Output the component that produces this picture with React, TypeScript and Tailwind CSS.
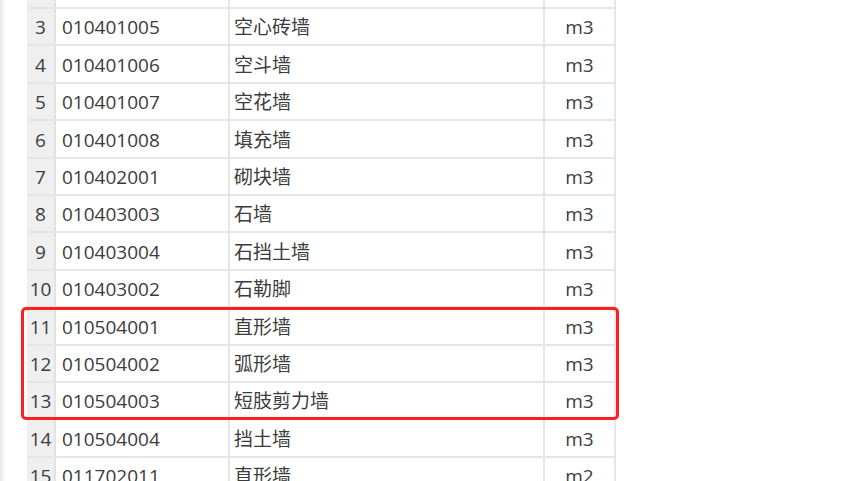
import React from "react"

type Row = { no: number; code: string; name: string; unit: string }

const rows: Row[] = [
  { no: 3, code: "010401005", name: "空心砖墙", unit: "m3" },
  { no: 4, code: "010401006", name: "空斗墙", unit: "m3" },
  { no: 5, code: "010401007", name: "空花墙", unit: "m3" },
  { no: 6, code: "010401008", name: "填充墙", unit: "m3" },
  { no: 7, code: "010402001", name: "砌块墙", unit: "m3" },
  { no: 8, code: "010403003", name: "石墙", unit: "m3" },
  { no: 9, code: "010403004", name: "石挡土墙", unit: "m3" },
  { no: 10, code: "010403002", name: "石勒脚", unit: "m3" },
  { no: 11, code: "010504001", name: "直形墙", unit: "m3" },
  { no: 12, code: "010504002", name: "弧形墙", unit: "m3" },
  { no: 13, code: "010504003", name: "短肢剪力墙", unit: "m3" },
  { no: 14, code: "010504004", name: "挡土墙", unit: "m3" },
  { no: 15, code: "011702011", name: "直形墙", unit: "m2" },
]

function TableRow({ row, height = "h-[37.4px]" }: { row?: Row; height?: string }) {
  return (
    <div className={`flex ${height} shrink-0 border-b-2 border-[#e6e6e6]`}>
      <div className="w-[29px] flex items-center justify-center pt-[2px] bg-[#efefef] border-r-2 border-[#e2e2e2]">
        {row?.no}
      </div>
      <div className="w-[174px] flex items-center pl-[6px] pt-[2px] border-r-2 border-[#e6e6e6]">
        {row?.code}
      </div>
      <div className="w-[315px] flex items-center pl-[4px] pt-[2px] border-r-2 border-[#e6e6e6]">
        {row?.name}
      </div>
      <div className="w-[71px] flex items-center justify-center pt-[2px] border-r-2 border-[#e6e6e6]">
        {row?.unit}
      </div>
    </div>
  )
}

export default function App() {
  const before = rows.slice(0, 8)
  const marked = rows.slice(8, 11)
  const after = rows.slice(11)

  return (
    <div
      className="relative h-[481px] w-[848px] overflow-hidden bg-white flex text-[19px] text-[#3c3c3c]"
      style={{ fontFamily: '"Open Sans", "Noto Sans CJK SC", sans-serif' }}
    >
      {/* soft shadow on the left edge */}
      <div className="w-[6px] shrink-0 bg-gradient-to-r from-[#e9e9e9] to-white" />
      <div className="ml-[21px] flex flex-col">
        <TableRow height="h-[9px]" />
        {before.map((r) => (
          <TableRow key={r.no} row={r} />
        ))}
        <div className="relative flex flex-col">
          {marked.map((r) => (
            <TableRow key={r.no} row={r} />
          ))}
          <div className="absolute -left-[6px] -right-[3px] -top-[1px] bottom-0 border-[3px] border-[#ff1f1f] rounded-[5px]" />
        </div>
        {after.map((r) => (
          <TableRow key={r.no} row={r} />
        ))}
      </div>
    </div>
  )
}
